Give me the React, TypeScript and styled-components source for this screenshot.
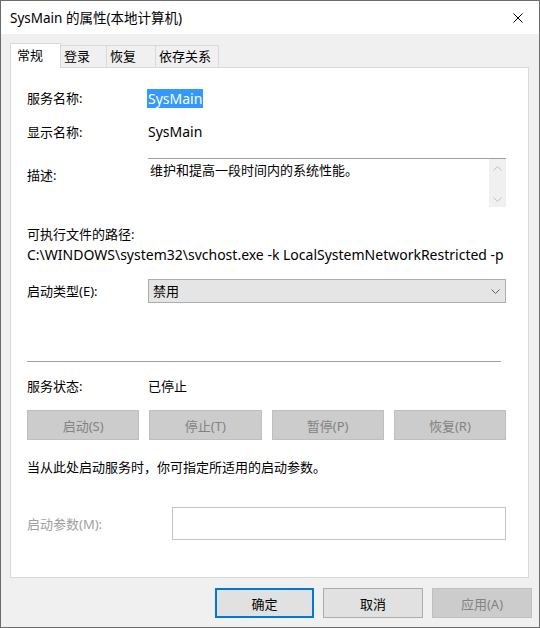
import React from "react";
import styled, { createGlobalStyle } from "styled-components";

const GlobalStyle = createGlobalStyle`
  html, body {
    margin: 0;
    padding: 0;
    background: #f0f0f0;
  }
  body {
    font-family: "Noto Sans", "Noto Sans CJK SC", sans-serif;
    font-size: 13px;
    color: #000;
  }
`;

const Window = styled.div`
  width: 540px;
  height: 628px;
  box-sizing: border-box;
  border: 1px solid #6b6b6b;
  background: #f0f0f0;
  display: flex;
  flex-direction: column;
`;

const TitleBar = styled.div`
  height: 33px;
  flex: none;
  background: #fff;
  display: flex;
  align-items: center;
  justify-content: space-between;
  padding-left: 9px;
`;

const Title = styled.span`
  font-size: 13.5px;
  line-height: 20px;
`;

const CloseButton = styled.div`
  width: 42px;
  height: 33px;
  display: flex;
  align-items: center;
  justify-content: center;
`;

const TabStrip = styled.div`
  display: flex;
  align-items: flex-end;
  height: 24px;
  margin: 9px 0 0 9px;
  position: relative;
  z-index: 1;
`;

const Tab = styled.div<{ $active?: boolean; $w: number }>`
  width: ${(p) => p.$w}px;
  height: ${(p) => (p.$active ? 25 : 22)}px;
  margin-bottom: ${(p) => (p.$active ? -1 : 0)}px;
  box-sizing: border-box;
  border: 1px solid #d9d9d9;
  border-bottom: none;
  background: ${(p) => (p.$active ? "#fff" : "#f0f0f0")};
  display: flex;
  align-items: center;
  padding: ${(p) => (p.$active ? "0 0 3px 6px" : "0 0 1px 3px")};
  & + & {
    margin-left: -1px;
  }
  line-height: 18px;
`;

const Panel = styled.div`
  width: 519px;
  height: 511px;
  flex: none;
  margin-left: 9px;
  box-sizing: border-box;
  border: 1px solid #d9d9d9;
  background: #fff;
  padding: 20px 22px 0 16px;
  display: flex;
  flex-direction: column;
`;

const Field = styled.div<{ $top?: number; $label?: number }>`
  display: grid;
  grid-template-columns: ${(p) => p.$label ?? 121}px 1fr;
  align-items: center;
  margin-top: ${(p) => p.$top ?? 0}px;
  min-height: 20px;
  line-height: 20px;
`;

const Label = styled.span<{ $disabled?: boolean }>`
  color: ${(p) => (p.$disabled ? "#a0a0a0" : "#000")};
  white-space: nowrap;
`;

const Latin = styled.span`
  font-size: 14px;
`;

const Selected = styled.span`
  justify-self: start;
  background: #3399ff;
  color: #fff;
  font-size: 14px;
  line-height: 19px;
  padding: 0 1px;
  margin-left: -1px;
`;

const DescLabel = styled.span`
  align-self: start;
  padding-top: 7px;
`;

const DescBox = styled.div`
  height: 49px;
  box-sizing: border-box;
  border-top: 1px solid #a0a0a0;
  display: flex;
`;

const DescText = styled.div`
  flex: 1;
  padding: 1px 0 0 2px;
  line-height: 20px;
`;

const ScrollBar = styled.div`
  width: 17px;
  background: #f0f0f0;
  display: flex;
  flex-direction: column;
  justify-content: space-between;
  align-items: center;
  padding: 7px 0 5px;
`;

const TextLine = styled.div<{ $top?: number }>`
  margin-top: ${(p) => p.$top ?? 0}px;
  line-height: 20px;
  white-space: nowrap;
`;

const PathLine = styled(TextLine)`
  font-size: 14px;
`;

const Select = styled.div`
  height: 24px;
  box-sizing: border-box;
  border: 1px solid #adadad;
  background: #e5e5e5;
  display: flex;
  align-items: center;
  justify-content: space-between;
  padding: 0 5px 0 4px;
`;

const Separator = styled.div`
  height: 1px;
  background: #a0a0a0;
  margin: 58px 5px 0 0;
`;

const ServiceButtons = styled.div`
  display: grid;
  grid-template-columns: repeat(4, 1fr);
  column-gap: 10px;
  margin-top: 14px;
`;

const ServiceButton = styled.div`
  height: 30px;
  box-sizing: border-box;
  border: 1px solid #bfbfbf;
  background: #cccccc;
  color: #838383;
  display: flex;
  align-items: center;
  justify-content: center;
`;

const ParamInput = styled.div`
  height: 33px;
  box-sizing: border-box;
  border: 1px solid #c4c4c4;
  background: #fff;
`;

const Footer = styled.div`
  display: flex;
  justify-content: flex-end;
  margin: 10px 7px 0 0;
`;

const DialogButton = styled.div<{ $primary?: boolean; $disabled?: boolean; $w: number }>`
  width: ${(p) => p.$w}px;
  height: 30px;
  box-sizing: border-box;
  margin-left: 9px;
  border: ${(p) =>
    p.$primary ? "2px solid #0078d7" : p.$disabled ? "1px solid #bfbfbf" : "1px solid #adadad"};
  background: ${(p) => (p.$disabled ? "#cccccc" : "#e1e1e1")};
  color: ${(p) => (p.$disabled ? "#838383" : "#000")};
  display: flex;
  align-items: center;
  justify-content: center;
`;

const Chevron = ({ up, color }: { up?: boolean; color: string }) => (
  <svg width="9" height="5" viewBox="0 0 9 5">
    <polyline
      points={up ? "0.5,4.5 4.5,0.5 8.5,4.5" : "0.5,0.5 4.5,4.5 8.5,0.5"}
      fill="none"
      stroke={color}
      strokeWidth="1"
    />
  </svg>
);

export default function App() {
  return (
    <>
      <GlobalStyle />
      <Window>
        <TitleBar>
          <Title>SysMain 的属性(本地计算机)</Title>
          <CloseButton>
            <svg width="10" height="10" viewBox="0 0 10 10">
              <path d="M0.5 0.5 L9.5 9.5 M9.5 0.5 L0.5 9.5" stroke="#000" strokeWidth="1" />
            </svg>
          </CloseButton>
        </TitleBar>

        <TabStrip>
          <Tab $active $w={51}>常规</Tab>
          <Tab $w={47}>登录</Tab>
          <Tab $w={50}>恢复</Tab>
          <Tab $w={64}>依存关系</Tab>
        </TabStrip>

        <Panel>
          <Field>
            <Label>服务名称:</Label>
            <Selected>SysMain</Selected>
          </Field>
          <Field $top={14}>
            <Label>显示名称:</Label>
            <Latin>SysMain</Latin>
          </Field>
          <Field $top={16}>
            <DescLabel>描述:</DescLabel>
            <DescBox>
              <DescText>维护和提高一段时间内的系统性能。</DescText>
              <ScrollBar>
                <Chevron up color="#c2c2c2" />
                <Chevron color="#c2c2c2" />
              </ScrollBar>
            </DescBox>
          </Field>

          <TextLine $top={17}>可执行文件的路径:</TextLine>
          <PathLine $top={1}>C:\WINDOWS\system32\svchost.exe -k LocalSystemNetworkRestricted -p</PathLine>

          <Field $top={14}>
            <Label>启动类型(E):</Label>
            <Select>
              <span>禁用</span>
              <Chevron color="#606060" />
            </Select>
          </Field>

          <Separator />

          <Field $top={14}>
            <Label>服务状态:</Label>
            <span>已停止</span>
          </Field>

          <ServiceButtons>
            <ServiceButton>启动(S)</ServiceButton>
            <ServiceButton>停止(T)</ServiceButton>
            <ServiceButton>暂停(P)</ServiceButton>
            <ServiceButton>恢复(R)</ServiceButton>
          </ServiceButtons>

          <TextLine $top={17}>当从此处启动服务时，你可指定所适用的启动参数。</TextLine>

          <Field $top={30} $label={145}>
            <Label $disabled>启动参数(M):</Label>
            <ParamInput />
          </Field>
        </Panel>

        <Footer>
          <DialogButton $primary $w={99}>确定</DialogButton>
          <DialogButton $w={100}>取消</DialogButton>
          <DialogButton $disabled $w={100}>应用(A)</DialogButton>
        </Footer>
      </Window>
    </>
  );
}
